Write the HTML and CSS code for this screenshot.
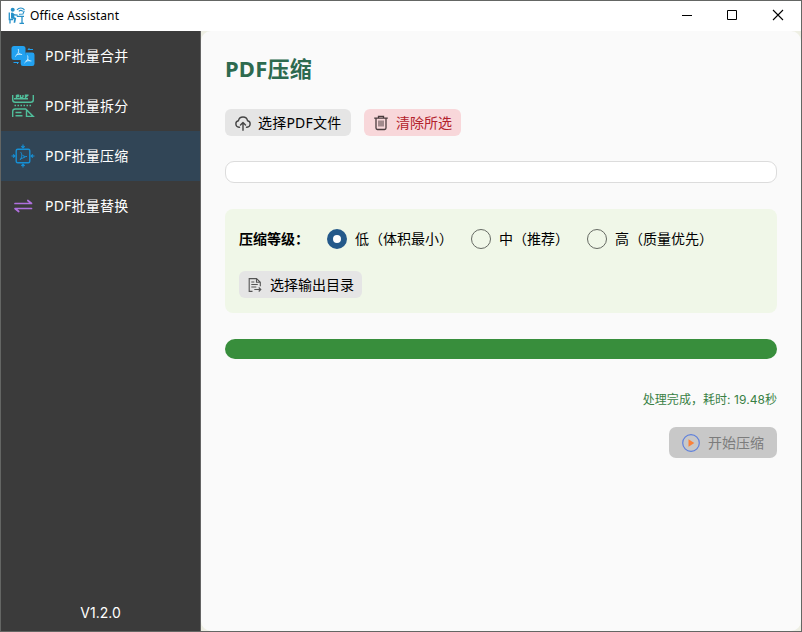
FILE: index.html
```html
<!DOCTYPE html>
<html lang="zh-CN">
<head>
<meta charset="utf-8">
<title>Office Assistant</title>
<link rel="stylesheet" href="styles.css">
</head>
<body>
<div class="window">
  <header class="titlebar">
    <svg class="app-icon" width="18" height="18" viewBox="0 0 18 18" fill="none" stroke="#2590c8" stroke-width="1.3">
      <circle cx="4.700" cy="2.800" r="2" fill="#2590c8" stroke="none"/>
      <path d="M3 5.800l1.500-.3 2.200 1.700 3 .3v1.200l-3.500-.2.2 1.700 1.800.8-1 4.800H5.600l.6-3.800-3.200-.6z" fill="#2590c8" stroke="none"/>
      <path d="M1.300 5.500v7h4M2 12.800v3.700M8.800 9.300H16M14 9.500v6.700M11.500 16.300h4.500"/>
      <path d="M9 2.800c2-2.400 5.500-2.400 7.500 0M10.800 4.300c1.300-1.300 2.700-1.300 4 0M11 7.300l4-.3 1.200-3.200" stroke-width="1.100"/>
    </svg>
    <h1 class="app-name">Office Assistant</h1>
    <div class="controls">
      <svg width="46" height="30" viewBox="0 0 46 30"><path d="M19 14.500h10" stroke="#000"/></svg>
      <svg width="46" height="30" viewBox="0 0 46 30"><path d="M18.500 9.500h9v9h-9z" stroke="#000" fill="none"/></svg>
      <svg width="46" height="30" viewBox="0 0 46 30"><path d="M18 9l10 10M28 9L18 19" stroke="#000" stroke-width="1.100"/></svg>
    </div>
  </header>
  <div class="body">
    <nav class="sidebar">
      <a class="item">
        <svg width="24" height="24" viewBox="0 0 24 24" fill="none">
          <rect x="0.500" y="2" width="14" height="14" rx="2.500" fill="#22a1f0"/>
          <path d="M14.500 8.500h6.700a2.300 2.300 0 0 1 2.300 2.300v8.900a2.300 2.300 0 0 1-2.300 2.300H12a2.300 2.300 0 0 1-2.300-2.300V16l4-2z" fill="#22a1f0"/>
          <path d="M7.200 5c1 2.500.2 5-3 7.500M7.300 8.500c1 1.500 2 2 3.800 2M5.500 10.500l4-.4M16.500 11.500c1 2.500.2 5-3 7.500M16.600 15c1 1.500 2 2 3.800 2M14.800 17l4-.4" stroke="#d5f0ff" stroke-width=".9"/>
          <path d="M17 5.500h5M17 5.500l1.500-1.500M2.500 18.500h5M7.500 18.500L6 20" stroke="#22a1f0"/>
        </svg>
        <span>PDF批量合并</span>
      </a>
      <a class="item">
        <svg width="24" height="24" viewBox="0 0 24 24" fill="none" stroke="#50be9b" stroke-width="1.400">
          <path d="M1.700 1v4.800q0 2.500 2.500 2.500h15.600q2.500 0 2.500-2.500V1"/>
          <path d="M5.500 1v3M5.500 1.300h2v1.200h-2M9.500 1v2.800h1.700l.8-1V1M14.500 4V1.200h3M14.500 2.500h2M3 4.800h14" stroke-width="1.400"/>
          <path d="M3.500 11.500h18" stroke-dasharray="1.500 1.500"/>
          <path d="M1.700 23v-5.500q0-2.500 2.500-2.500h10.500l7.500 7.400h-6.700V15.500M4.500 18.500h6M4.500 21.700h7"/>
        </svg>
        <span>PDF批量拆分</span>
      </a>
      <a class="item active">
        <svg width="24" height="24" viewBox="0 0 24 24" fill="none" stroke="#168fd4" stroke-width="1.400">
          <rect x="5.200" y="5.200" width="13.600" height="13.600" rx="1.500"/>
          <path d="M9.500 8c2 2 1.500 5.500-.5 8M11 10.700c1.200 1.500 2.500 2 5 1.800M9.500 15l5-2.200" stroke-width="1"/>
          <path d="M12 .500v3.300M10.300 2.200L12 3.900l1.700-1.700M12 23.500v-3.300M10.300 21.800l1.700-1.700 1.700 1.700M.500 12h3.300M2.200 10.300L3.900 12l-1.700 1.700M23.500 12h-3.300M21.800 10.300L20.100 12l1.700 1.700" stroke-width="1.200"/>
        </svg>
        <span>PDF批量压缩</span>
      </a>
      <a class="item">
        <svg width="24" height="24" viewBox="0 0 24 24" fill="none" stroke="#b070de" stroke-width="1.700" stroke-linecap="round" stroke-linejoin="round">
          <path d="M4 9.500h16.500l-3.700-3M20.500 14.500H4l3.700 3"/>
        </svg>
        <span>PDF批量替换</span>
      </a>
      <div class="version">V1.2.0</div>
    </nav>
    <div class="main-wrap">
      <main class="main">
        <h2 class="heading">PDF压缩</h2>
        <div class="actions">
          <button class="btn pick">
            <svg width="16" height="16" viewBox="0 0 16 16" fill="none" stroke="#444" stroke-width="1.400" stroke-linecap="round" stroke-linejoin="round">
              <path d="M4.500 12.300H4A3.300 3.300 0 0 1 3.400 5.800a4.700 4.700 0 0 1 9.200 0A3.300 3.300 0 0 1 12 12.300h-.5M8 15.200V7.700M5.500 10L8 7.500 10.500 10"/>
            </svg>
            <span>选择PDF文件</span>
          </button>
          <button class="btn clear">
            <svg width="16" height="16" viewBox="0 0 16 16" fill="none" stroke="#4a3c3e" stroke-width="1.300">
              <path d="M1.200 3.200h13.600M5.500 3V1.300h5V3M3 3.500v9.600q0 1.400 1.400 1.400h7.200q1.400 0 1.400-1.400V3.500"/>
              <path d="M6 5.500v6M8 5.500v6M10 5.500v6" stroke-width="1"/>
            </svg>
            <span>清除所选</span>
          </button>
        </div>
        <div class="file-list"></div>
        <section class="options">
          <div class="levels">
            <span class="label">压缩等级：</span>
            <label class="radio low"><i class="dot checked"></i>低（体积最小）</label>
            <label class="radio mid"><i class="dot"></i>中（推荐）</label>
            <label class="radio"><i class="dot"></i>高（质量优先）</label>
          </div>
          <button class="btn output">
            <svg width="16" height="16" viewBox="0 0 16 16" fill="none" stroke="#555" stroke-width="1.100">
              <path d="M5.500 14.400H2.200V1.600h7.300l3.800 3.700v4M9.500 1.600v3.700h3.800M4.300 5h3M4.300 7.500h6.500M4.300 10h5M7.300 12.500h6.500M11.700 10.500l2.100 2-2.100 2"/>
            </svg>
            <span>选择输出目录</span>
          </button>
        </section>
        <div class="progress"></div>
        <div class="status">处理完成，耗时: 19.48秒</div>
        <button class="start" disabled>
          <svg width="18" height="18" viewBox="0 0 18 18"><circle cx="9" cy="9" r="8.300" fill="none" stroke="#5f80dc" stroke-width="1.200"/><path d="M6.500 5.200L12.300 9l-5.800 3.800z" fill="#fb8138"/></svg>
          <span>开始压缩</span>
        </button>
      </main>
    </div>
  </div>
</div>
</body>
</html>
```
FILE: styles.css
```css
* { box-sizing: border-box; }
body { margin: 0; font: 14px/20px "Noto Sans", "Noto Sans CJK SC", sans-serif; color: #000; }
svg { display: block; flex: none; }
button { border: 0; margin: 0; font: inherit; white-space: nowrap; }
.window { width: 802px; height: 632px; border: 1px solid #646664; display: flex; flex-direction: column; background: #fff; }
.titlebar { height: 30px; display: flex; align-items: center; padding-left: 7px; background: #fff; flex: none; }
.app-name { margin: 0 0 0 4px; font-size: 12px; font-weight: 400; line-height: 18px; letter-spacing: .12px; }
.controls { display: flex; margin-left: auto; }
.body { flex: 1; display: flex; min-height: 0; }
.sidebar { width: 200px; background: #3b3b3b; border-right: 1px solid #646464; display: flex; flex-direction: column; color: #fff; flex: none; }
.item { height: 50px; padding-left: 10px; display: flex; align-items: center; gap: 10px; letter-spacing: .2px; }
.item.active { background: #314556; }
.version { margin-top: auto; height: 28px; text-align: center; font-family: Inter, sans-serif; }
.main-wrap { flex: 1; background: #eeefe4; }
.main { height: 100%; background: #fafafa; border-radius: 10px; padding: 22px 24px 0; display: flex; flex-direction: column; }
.heading { margin: 0; font-size: 22px; line-height: 30px; font-weight: 700; color: #2d6a4f; letter-spacing: .2px; }
.actions { display: flex; gap: 13px; margin-top: 26px; }
.btn { height: 27px; border-radius: 6px; display: flex; align-items: center; padding: 0; background: #e5e5e5; color: #000; }
.btn.pick { width: 126px; padding-left: 10px; gap: 7px; letter-spacing: .2px; }
.btn.clear { width: 97px; padding-left: 9px; gap: 7px; background: #f8d7da; color: #b3222c; }
.file-list { height: 22px; margin-top: 25px; border: 1px solid #dcdcdc; border-radius: 9px; background: #fff; }
.options { margin-top: 26px; height: 104px; border-radius: 8px; background: #f0f7e8; padding: 20px 14px; }
.levels { display: flex; align-items: center; height: 20px; }
.label { width: 88px; font-weight: 700; }
.radio { display: flex; align-items: center; gap: 8px; width: 116px; white-space: nowrap; }
.radio.low { width: 144px; }
.dot { width: 20px; height: 20px; border: 1px solid #666a63; border-radius: 50%; flex: none; }
.dot.checked { border: 6px solid #24598a; background: #fff; }
.btn.output { margin-top: 22px; width: 123px; padding-left: 8px; gap: 7px; }
.progress { height: 20px; margin-top: 26px; border-radius: 10px; background: #388e3c; }
.status { margin-top: 31px; height: 20px; text-align: right; font: 12px/20px Inter, "Noto Sans CJK SC", sans-serif; letter-spacing: .05px; color: #388044; }
.start { align-self: flex-end; margin-top: 17px; width: 108px; height: 31px; border-radius: 7px; background: #c8c8c8; color: #7c7c7c; display: flex; align-items: center; padding: 0 0 0 13px; gap: 8px; }
```
